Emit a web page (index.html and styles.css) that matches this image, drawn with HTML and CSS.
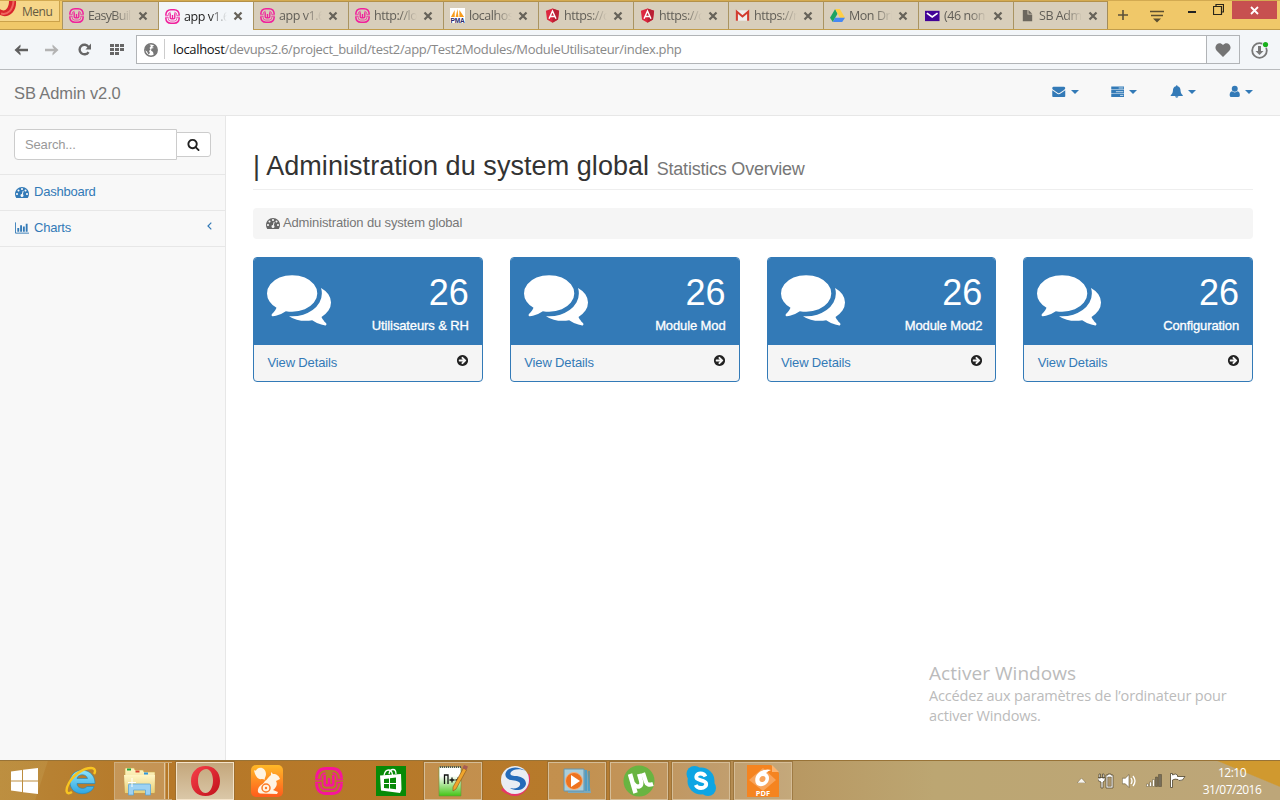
FILE: index.html
```html
<!DOCTYPE html>
<html lang="fr">
<head>
<meta charset="utf-8">
<title>app v1.6</title>
<link rel="stylesheet" href="styles.css">
</head>
<body>
<svg class="defs" width="0" height="0" aria-hidden="true">
  <defs>
    <linearGradient id="gold" x2="0" y2="1"><stop stop-color="#ffb928"/><stop offset="1" stop-color="#ff5c1c"/></linearGradient>
    <linearGradient id="lime" x2="0" y2="1"><stop offset=".3" stop-color="#fff"/><stop offset="1" stop-color="#43c414"/></linearGradient>
    <linearGradient id="folder" x2="0" y2="1"><stop stop-color="#fff6c5"/><stop offset="1" stop-color="#e8cf78"/></linearGradient>
    <linearGradient id="ieblue" x2="0" y2="1"><stop stop-color="#8ee4fb"/><stop offset="1" stop-color="#2fa6e2"/></linearGradient>
    <linearGradient id="opera" x2="1" y2="1"><stop stop-color="#f8404a"/><stop offset="1" stop-color="#c0101a"/></linearGradient>
    <symbol id="wamp" viewBox="0 0 28 28"><g fill="none" stroke="currentColor"><path d="M1.500 11.500Q2 1.500 11 1.500h6q9 0 9.500 10M1.500 16.500Q2 26.500 11 26.500h6q9 0 9.500-10" stroke-width="2.800"/><path d="M0 12.500h6V11q0-4.500 4.500-5M0 15.500h6V18q0 4.500 4.500 4.500h7q4.500 0 4.500-4.500v-2.500h6M28 12.500h-6V11q0-4.500-4.500-5" stroke-width="1.400"/><path d="M9.700 8v8.500q0 2 2.200 2 2.100 0 2.100-2V11v5.500q0 2 2.100 2 2.200 0 2.200-2V8" stroke-width="2.500"/></g></symbol>
    <symbol id="angular" viewBox="0 0 16 16"><path d="M8 .5l7 2.400-1.100 9.300L8 15.600l-5.900-3.400L1 2.900z" fill="#dd2740"/><path d="M8 .5l7 2.400-1.100 9.300L8 15.600z" fill="#b92034"/><path d="M4.300 11.400L8 3.200l3.700 8.200M5.600 9h4.800" fill="none" stroke="#fff" stroke-width="1.500"/></symbol>
    <symbol id="dash" viewBox="0 0 1792 1792"><path d="M384 1152q0-53-37.500-90.500t-90.500-37.500-90.500 37.500-37.500 90.500 37.500 90.500 90.500 37.500 90.500-37.500 37.500-90.500zm192-448q0-53-37.500-90.500t-90.500-37.500-90.500 37.500-37.500 90.500 37.500 90.500 90.500 37.500 90.500-37.500 37.500-90.500zm428 481l101-382q6-26-7.500-48.500t-38.500-29.500-48 6.500-30 39.500l-101 382q-60 5-107 43.500t-63 98.500q-20 77 20 146t117 89 146-20 89-117q16-60-6-117t-72-91zm660-33q0-53-37.500-90.500t-90.500-37.500-90.500 37.500-37.500 90.500 37.500 90.500 90.500 37.500 90.500-37.500 37.500-90.500zm-640-640q0-53-37.500-90.500t-90.500-37.500-90.500 37.500-37.500 90.500 37.500 90.500 90.500 37.500 90.500-37.500 37.500-90.500zm448 192q0-53-37.500-90.500t-90.500-37.500-90.500 37.500-37.500 90.500 37.500 90.500 90.500 37.500 90.500-37.500 37.500-90.500zm320 448q0 261-141 483-19 29-54 29h-1402q-35 0-54-29-141-221-141-483 0-182 71-348t191-286 286-191 348-71 348 71 286 191 191 286 71 348z"/></symbol>
    <symbol id="comments" viewBox="0 0 1792 1792"><path d="M1408 768q0 139-94 257t-256.500 186.500-353.500 68.500q-86 0-176-16-124 88-278 128-36 9-86 16h-3q-11 0-20.500-8t-11.500-21q-1-3-1-6.500t.5-6.500 2-6l2.500-5 3.500-5.500 4-5 4.500-5 4-4.500q5-6 23-25t26-29.500 22.500-29 25-38.500 20.500-44q-124-72-195-177t-71-224q0-139 94-257t256.500-186.500 353.500-68.500 353.500 68.500 256.500 186.500 94 257zm384 256q0 120-71 224.500t-195 176.500q10 24 20.500 44t25 38.500 22.500 29 26 29.500 23 25q1 1 4 4.500t4.500 5 4 5 3.500 5.500l2.500 5 2 6 .5 6.500-1 6.500q-3 14-13 22t-22 7q-50-7-86-16-154-40-278-128-90 16-176 16-271 0-472-132 58 4 88 4 161 0 309-45t264-129q125-92 192-212t67-254q0-77-23-152 129 71 204 178t75 230z"/></symbol>
    <symbol id="arrow" viewBox="0 0 1792 1792"><path d="M1413 896q0-27-18-45l-91-91-362-362q-18-18-45-18t-45 18l-91 91q-18 18-18 45t18 45l189 189h-502q-26 0-45 19t-19 45v128q0 26 19 45t45 19h502l-189 189q-19 19-19 45t19 45l91 91q18 18 45 18t45-18l362-362 91-91q18-18 18-45zm251 0q0 209-103 385.500t-279.500 279.500-385.500 103-385.500-103-279.500-279.500-103-385.500 103-385.500 279.500-279.500 385.500-103 385.500 103 279.500 279.500 103 385.500z"/></symbol>
    <symbol id="x" viewBox="0 0 10 10"><path d="M1.500 1.500l7 7M8.500 1.500l-7 7" stroke="#666259" stroke-width="2.200"/></symbol>
  </defs>
</svg>

<header class="tabbar">
  <div class="menu"><svg width="17" height="17" viewBox="0 0 17 17"><path d="M0 8C5 12 9 7 9 0h7c1 11-8 18-16 14z" fill="#d8262c"/><path d="M1 12.500c7 2 12-4 12.500-12.500" fill="none" stroke="#f0665f" stroke-width="2"/></svg><span>Menu</span></div>
  <nav class="tabs">
    <div class="tab first"><svg class="fav pink"><use href="#wamp"/></svg><span>EasyBuil</span><svg class="x"><use href="#x"/></svg></div>
    <div class="tab active"><svg class="fav pink"><use href="#wamp"/></svg><span>app v1.6</span><svg class="x"><use href="#x"/></svg></div>
    <div class="tab"><svg class="fav pink"><use href="#wamp"/></svg><span>app v1.6</span><svg class="x"><use href="#x"/></svg></div>
    <div class="tab"><svg class="fav pink"><use href="#wamp"/></svg><span>http://lo</span><svg class="x"><use href="#x"/></svg></div>
    <div class="tab"><svg class="fav" viewBox="0 0 16 16"><path d="M0 0h16v16H0z" fill="#fff"/><path d="M1 9.500L5 2v7.500zM6 9.500L8 1l1 8.500zM10 9.500V2l5 7.500z" fill="#f89c1c"/><text x="8" y="15.700" class="pma">PMA</text></svg><span>localhos</span><svg class="x"><use href="#x"/></svg></div>
    <div class="tab"><svg class="fav"><use href="#angular"/></svg><span>https://c</span><svg class="x"><use href="#x"/></svg></div>
    <div class="tab"><svg class="fav"><use href="#angular"/></svg><span>https://c</span><svg class="x"><use href="#x"/></svg></div>
    <div class="tab"><svg class="fav" viewBox="0 0 16 16"><path d="M1 2.500h14v11H1z" fill="#eee"/><path d="M2 13.500V4l6 5 6-5v9.500" fill="none" stroke="#d23c30" stroke-width="2.200"/></svg><span>https://r</span><svg class="x"><use href="#x"/></svg></div>
    <div class="tab"><svg class="fav" viewBox="0 0 16 16"><path d="M5.500 1L0 10.500 3 15 8 6z" fill="#1da362"/><path d="M5.500 1h5l5.500 9.500h-5.500z" fill="#ffcf45"/><path d="M5.500 10.500H16L13 15H3z" fill="#4688f4"/></svg><span>Mon Dri</span><svg class="x"><use href="#x"/></svg></div>
    <div class="tab"><svg class="fav" viewBox="0 0 16 16"><path d="M0 3h15.500v11H0z" fill="#420297"/><path d="M2 5.500l5.700 4 5.700-4" fill="none" stroke="#fff" stroke-width="1.800"/></svg><span>(46 non</span><svg class="x"><use href="#x"/></svg></div>
    <div class="tab"><svg class="fav" viewBox="0 0 16 16"><path d="M3 2h5v5h5v7H3z" fill="#6c675e"/><path d="M9 2l4 4H9z" fill="#6c675e"/></svg><span>SB Adm</span><svg class="x"><use href="#x"/></svg></div>
  </nav>
  <svg class="plus" width="10" height="10"><path d="M5 0v10M0 5h10" stroke="#5b503a" stroke-width="1.600"/></svg>
  <svg class="tabmenu" width="14" height="13"><path d="M0 1.500h14M1 5.500h12" stroke="#5b4e30" stroke-width="1.500"/><path d="M3 8.500h8L7 12.500z" fill="#5b4e30"/></svg>
  <svg class="min" width="8" height="3"><path d="M0 0h8v2H0z" fill="#222"/></svg>
  <svg class="max" width="11" height="11"><path d="M3 2.500V.5h7.500v7.500H8.500M.5 2.500h8v8h-8z" fill="none" stroke="#292519" stroke-width="1.200"/></svg>
  <div class="close"><svg width="9" height="9"><path d="M1 1l7 7M8 1l-7 7" stroke="#fff" stroke-width="1.800"/></svg></div>
</header>

<div class="toolbar">
  <svg class="back" width="14" height="12" viewBox="0 0 14 12"><path d="M6.500.5L.5 6l6 5.500V9L5 7.300h9V4.700H5L6.500 3z" fill="#5f5f5f"/></svg>
  <svg class="fwd" width="14" height="12" viewBox="0 0 14 12"><path d="M7.500.5l6 5.500-6 5.500V9L9 7.300H0V4.700h9L7.500 3z" fill="#b3b3b3"/></svg>
  <svg class="reload" width="13" height="13" viewBox="0 0 13 13"><path d="M10.500 9a4.800 4.800 0 1 1 0-5" fill="none" stroke="#666" stroke-width="2.400"/><path d="M13 .5v6H7.500z" fill="#666"/></svg>
  <svg class="apps" width="14" height="11"><path d="M0 1.500h14M0 5.500h14M0 9.500h9" stroke="#666" stroke-width="3" stroke-dasharray="4 1"/></svg>
  <div class="address">
    <svg width="14" height="14" viewBox="0 0 14 14"><circle cx="7" cy="7" r="6.200" fill="#fff" stroke="#777" stroke-width="1.500"/><path d="M1.500 4L5 1.500 7 3 5.500 5l1 1.500L5 8l1 2-1.500 1.500L3 8.500 1 7zM8 4l3-2 2 4v4l-3 3-1-4-2-1.500.5-2L10 5z" fill="#777"/></svg>
    <span class="url"><b>localhost</b>/devups2.6/project_build/test2/app/Test2Modules/ModuleUtilisateur/index.php</span>
    <div class="heart"><svg width="16" height="14" viewBox="0 0 16 14"><path d="M8 14L1.500 7.500C-2 3 4-2.500 8 2c4-4.500 10 1 6.500 5.500z" fill="#747474"/></svg></div>
  </div>
  <svg class="download" width="18" height="18" viewBox="0 0 18 18"><circle cx="8.500" cy="9.500" r="7.300" fill="none" stroke="#777" stroke-width="1.800"/><path d="M7 5h3v5h2.500l-4 4-4-4H7z" fill="#777"/><circle cx="14.500" cy="3.500" r="3.300" fill="#f3f6f9"/><circle cx="14.500" cy="3.500" r="2.600" fill="#19b01c"/></svg>
</div>

<div class="navbar">
  <a class="brand">SB Admin v2.0</a>
  <div class="toplinks">
    <a><svg class="ic" viewBox="0 0 1792 1792"><path d="M1792 710v794q0 66-47 113t-113 47h-1472q-66 0-113-47t-47-113v-794q44 49 101 87 362 246 497 345 57 42 92.500 65.500t94.500 48 110 24.500h2q51 0 110-24.500t94.500-48 92.500-65.500q170-123 498-345 57-39 100-87zm0-294q0 79-49 151t-122 123q-376 261-468 325-10 7-42.500 31t-54 38.500-52 32.500-57.500 27-50 9h-2q-23 0-50-9t-57.500-27-52-32.500-54-38.500-42.500-31q-91-64-262-182.500t-205-142.500q-62-42-117-115.500t-55-136.500q0-78 41.500-130t118.500-52h1472q65 0 112.500 47t47.500 113z"/></svg><i class="caret"></i></a>
    <a><svg class="ic" viewBox="0 0 14 14"><path d="M0 1.500h14v3.300H0zM0 5.500h14v3.300H0zM0 9.500h14v3.300H0z"/><path d="M8 3.200h5M5 7.200h8M9.500 11.200h3.500" stroke="#c9dff0"/></svg><i class="caret"></i></a>
    <a><svg class="ic" viewBox="0 0 14 14"><path d="M7 .3q.9 0 .9 1c2.300.5 3.100 2.200 3.200 4.700.1 2.400.9 4 2.400 5v.8H.5V11c1.500-1 2.300-2.600 2.400-5 .1-2.500.9-4.200 3.200-4.700q0-1 .9-1zM5.200 12.200h3.600q-.2 1.600-1.800 1.600t-1.800-1.600z"/></svg><i class="caret"></i></a>
    <a><svg class="ic person" viewBox="0 0 11 14"><circle cx="5.500" cy="4" r="3.200"/><path d="M2.500 6.800q3 2.500 6 0Q11 7.500 11 11q0 2-2 2H2q-2 0-2-2 0-3.500 2.500-4.200z"/></svg><i class="caret"></i></a>
  </div>
</div>

<div class="page">
  <aside class="sidebar">
    <div class="search"><div class="field">Search...</div><div class="go"><svg width="13" height="13" viewBox="0 0 1792 1792"><path d="M1216 832q0-185-131.500-316.500t-316.500-131.500-316.500 131.500-131.500 316.500 131.500 316.500 316.500 131.500 316.500-131.500 131.500-316.500zm512 832q0 52-38 90t-90 38q-54 0-90-38l-343-342q-179 124-399 124-143 0-273.500-55.500t-225-150-150-225-55.500-273.500 55.500-273.500 150-225 225-150 273.500-55.500 273.500 55.500 225 150 150 225 55.500 273.500q0 220-124 399l343 343q37 37 37 90z"/></svg></div></div>
    <a class="item"><svg width="14" height="14"><use href="#dash"/></svg><span>Dashboard</span></a>
    <a class="item"><svg width="14" height="14" viewBox="0 0 15 14"><path d="M.5 1v11.500H15" fill="none" stroke="#337ab7"/><path d="M2.500 7h2v4h-2zM5.500 4h2v7h-2zM8.500 5.500h2V11h-2zM11.500 2.500h2V11h-2z"/></svg><span>Charts</span><svg class="angle" width="5" height="8"><path d="M4.300.7L1 4l3.300 3.300" fill="none" stroke="#337ab7" stroke-width="1.200"/></svg></a>
  </aside>
  <main>
    <h1>| Administration du system global <small>Statistics Overview</small></h1>
    <div class="crumb"><svg width="14" height="14"><use href="#dash"/></svg><span>Administration du system global</span></div>
    <div class="cards">
      <section class="card"><div class="top"><svg class="bubble"><use href="#comments"/></svg><div class="num"><strong>26</strong><span class="lab">Utilisateurs &amp; RH</span></div></div><a class="foot">View Details<svg width="13" height="13"><use href="#arrow"/></svg></a></section>
      <section class="card"><div class="top"><svg class="bubble"><use href="#comments"/></svg><div class="num"><strong>26</strong><span class="lab">Module Mod</span></div></div><a class="foot">View Details<svg width="13" height="13"><use href="#arrow"/></svg></a></section>
      <section class="card"><div class="top"><svg class="bubble"><use href="#comments"/></svg><div class="num"><strong>26</strong><span class="lab">Module Mod2</span></div></div><a class="foot">View Details<svg width="13" height="13"><use href="#arrow"/></svg></a></section>
      <section class="card"><div class="top"><svg class="bubble"><use href="#comments"/></svg><div class="num"><strong>26</strong><span class="lab">Configuration</span></div></div><a class="foot">View Details<svg width="13" height="13"><use href="#arrow"/></svg></a></section>
    </div>
  </main>
</div>

<div class="watermark"><div class="wm-title">Activer Windows</div><div>Accédez aux paramètres de l’ordinateur pour</div><div>activer Windows.</div></div>

<footer class="taskbar">
  <div class="start"><svg width="27" height="26" viewBox="0 0 27 26"><path d="M0 3.500l11-1.500v10.500H0zM12 1.800L27 0v12.500H12zM0 13.500h11V24L0 22.500zM12 13.500h15V26l-15-1.800z" fill="#fff"/></svg></div>
  <div class="cell"><svg width="32" height="32" viewBox="0 0 32 32"><path fill-rule="evenodd" d="M30 18.500H12c0 5 7 6.500 10 3h7C26 31.500 5 32 5 17 5 1 30 1 30 18.500zM12 13.500h10.500c-1-5-9.500-5-10.500 0z" fill="url(#ieblue)" stroke="#2789bd" stroke-width=".7"/><path d="M7 27C1 31 0 25 4 18 9 9 19 3 26 3c4 0 5 3 3 6" fill="none" stroke="#f8c521" stroke-width="2.400"/></svg></div>
  <div class="cell explorer"><svg width="32" height="32" viewBox="0 0 32 32"><path d="M2 4q0-1 1-1h8l1 2h8l1 2h11v21H2z" fill="url(#folder)" stroke="#c9a846" stroke-width=".6"/><path d="M4 3.500h4v2H4z" fill="#20a53c"/><path d="M12.500 5.500h4v2h-4z" fill="#d7442f"/><path d="M21 7.500h4v2h-4z" fill="#2d98de"/><path d="M1 10h31l-1 18H2z" fill="url(#folder)"/><path d="M5.500 30V20q0-1 1-1h20q1 0 1 1v10h-5v-5h-12v5z" fill="#9dd2f3" stroke="#5ca6d8" stroke-width=".8"/><path d="M9 13v9M5 17.500h8" stroke="#fff"/></svg><i></i><i></i></div>
  <div class="cell open current"><svg width="31" height="32" viewBox="0 0 31 32"><path fill-rule="evenodd" d="M15.500 1C24 1 30 7 30 16s-6 15-14.500 15S1 25 1 16 7 1 15.500 1zm1 3C11 4 8 9 8 15.500S11 28 15.500 28 23 22 23 15.500 20 4 16.500 4z" fill="url(#opera)"/></svg></div>
  <div class="cell"><svg width="32" height="32" viewBox="0 0 32 32"><rect width="32" height="32" rx="5" fill="url(#gold)"/><path d="M9 28.500C6 28 6 23 10 20c5-3 5-6 1-6-4 1-7-3-8-9 1 1 2 1 3-1 4-3 9 0 9 5 0 3-2 4-1 7 2-1 3-4 6-6V7l2 2c4 0 6 2 7 5l-4 2c2 3 0 7-3 9l5 2-1 2z" fill="#fff4e3"/><circle cx="15" cy="23" r="4" fill="#fff4e3" stroke="#ff7b24" stroke-width="1.500"/><circle cx="15" cy="23" r="1.200" fill="#ff7b24"/></svg></div>
  <div class="cell"><svg class="wampbig" width="28" height="28"><use href="#wamp"/></svg></div>
  <div class="cell"><svg width="30" height="30" viewBox="0 0 30 30"><path d="M0 0h30v30H0z" fill="#078a07"/><path d="M4 9.500L25 8l.5 15.500L24 27 5 24.500z" fill="#fff"/><path d="M8 9.500Q9 4 12.500 4t4 5M13 8q1-4.500 4-4.500T20 8" fill="none" stroke="#fff" stroke-width="1.300"/><path d="M8 13l5-.6V17H8zM14 12.300l6-.7V17h-6zM8 18h5v4.500L8 22zM14 18h6v5.300l-6-.7z" fill="#078a07"/></svg></div>
  <div class="cell open"><svg width="32" height="32" viewBox="0 0 32 32"><path d="M2 2h22v29H2z" fill="url(#lime)" stroke="#66933d" stroke-width=".6"/><path d="M3 2h21" stroke="#555" stroke-width="2" stroke-dasharray="1 1"/><path d="M7.500 19v-9h3.500v9M12.500 15h5M15 12.500v5M18.500 15h5M21 12.500v5" fill="none" stroke="#111" stroke-width="1.300"/><path d="M26.500 3l3 2-10.500 19-3 2v-4z" fill="#f0a52c" stroke="#865317" stroke-width=".6"/><path d="M27 0l4 1.500-1.500 3.500-4-2z" fill="#a65b54"/></svg></div>
  <div class="cell"><svg width="32" height="32" viewBox="0 0 32 32"><path d="M3 24q14 11 23 0 5-7 3-15" fill="none" stroke="#e83667" stroke-width="3"/><circle cx="16" cy="15" r="14" fill="#e9edf3"/><path d="M27 6Q17 0 10 4C4 8 6 14 12 15c5 1 10 1 9 5-1 3-5 4-10 3 6 4 15 2 16-4 0-5-4-7-9-8-5 0-8-1-6-4s9-4 15-1z" fill="#246bb9"/></svg></div>
  <div class="cell open"><svg width="32" height="28" viewBox="0 0 32 28"><path d="M5 3h21l4 23H7z" fill="#7ba9bd"/><path d="M3 2h20v22H3z" fill="#a9cedb" stroke="#6795ad"/><path d="M25 3v21M28 4v20" stroke="#2792cc"/><circle cx="13" cy="14" r="8.500" fill="#ee731e" stroke="#f7b27d"/><path d="M10 8l9 6-9 6z" fill="#fff"/></svg></div>
  <div class="cell open"><svg width="32" height="32" viewBox="0 0 32 32"><circle cx="16" cy="16" r="15.500" fill="#69b441"/><path d="M7 9l5.500 19" fill="none" stroke="#fff" stroke-width="4.500"/><path d="M10 18q3 5 7 3 2-1 1-5l-2-7M20 8l3 9q1 4 7 2" fill="none" stroke="#fff" stroke-width="4.200"/></svg></div>
  <div class="cell open"><svg width="32" height="32" viewBox="0 0 32 32"><g fill="#0ea5e3"><circle cx="16" cy="16" r="13.500"/><circle cx="9.500" cy="9" r="8"/><circle cx="23" cy="23" r="8"/></g><path d="M20.500 11.500q-1.500-3-5-3C11.500 8.500 10.500 12 12 13.700c2 1.800 8 1.800 9 4.300 1 3-2 5-5 5q-4 0-5.300-3" fill="none" stroke="#fff" stroke-width="3.800"/></svg></div>
  <div class="cell open"><svg width="32" height="32" viewBox="0 0 32 32"><path d="M0 0h24l8 8v24H0z" fill="#f58420"/><path d="M25 0v7h7z" fill="#fbb36f"/><path d="M16 3l13 12-13 11L2 15z" fill="#f8a45b"/><path fill-rule="evenodd" d="M24 5q-3-1-7 0C9 7 6 15 10 20c4 3 12 0 12-7 0-2-1-4-3-5q2-2 5-3zm-8 6c4 0 3 6-1 6s-3-6 1-6z" fill="#fff"/><text x="16" y="30.500" class="pdf">PDF</text></svg></div>
  <div class="tray">
    <svg width="9" height="5"><path d="M0 5l4.500-5L9 5z" fill="#f7f5ef" stroke="#756746" stroke-width=".5"/></svg>
    <svg class="power" width="16" height="16" viewBox="0 0 16 16"><path d="M0 4.500h7v3L5 9v6H3V9L0 7.500zM1 1h1.500v4H1zM4.500 1H6v4H4.500zM8 2h2V1h3v1h2v13H8z" fill="#fff" stroke="#574c36" stroke-width=".8"/><path d="M9.700 4h3.600v9.300H9.700z" fill="#ad966c" stroke="#574c36" stroke-width=".5"/></svg>
    <svg width="15" height="14" viewBox="0 0 15 14"><path d="M.3 4.200h3L7 .5v13L3.300 9.800h-3z" fill="#fff" stroke="#625435" stroke-width=".6"/><path d="M9 4q2 3 0 6M11 2q4 5 0 10" fill="none" stroke="#fff" stroke-width="1.300"/></svg>
    <svg width="16" height="13" viewBox="0 0 16 13"><path d="M.5 10h2v2.500h-2zM3.500 8h2v4.500h-2zM6.500 5.500h2v7h-2z" fill="#fff" stroke="#625435" stroke-width=".5"/><path d="M9.500 3h2v9.500h-2zM12.500.5h3v12h-3z" fill="#776e5b" stroke="#524832" stroke-width=".5"/></svg>
    <svg width="16" height="15" viewBox="0 0 16 15"><path d="M.5.500h2V2q3-2 5 0v1.500h7.500q-2 5-6 4l-1-1q-3-1-5.500.5v7.500h-2z" fill="#fff" stroke="#4f452f" stroke-width=".8"/></svg>
  </div>
  <div class="clock"><span>12:10</span><span>31/07/2016</span></div>
</footer>
</body>
</html>
```
FILE: styles.css
```css
* { box-sizing: border-box; }
body { margin: 0; width: 1280px; height: 800px; overflow: hidden; display: flex; flex-direction: column; font: 13px/18px "Liberation Sans", Arial, sans-serif; letter-spacing: -.14px; color: #333; background: #fff; }
svg { display: block; flex: none; }
.defs { position: absolute; }

.tabbar { height: 30px; flex: none; display: flex; align-items: flex-start; background: #f0c869; border-bottom: 1px solid #c19c4b; border-top: 1px solid #d3aa51; font: 12.5px/16px "Open Sans", "Noto Sans", sans-serif; }
.menu { width: 60px; height: 21px; margin-right: 2px; display: flex; background: #f6d689; border: solid #cba24a; border-width: 0 1px 1px 0; color: #655a42; font-size: 12px; }
.menu span { margin: 3px 0 0 5px; letter-spacing: -.5px; }
.tabs { display: flex; }
.tab { width: 95px; height: 28px; display: flex; align-items: center; padding-left: 6px; background: #d8cebb; border-left: 1px solid #a99462; border-top: 1px solid #b49149; color: #615e57; }
.tab.first { width: 96px; }
.tab:last-child { border-right: 1px solid #a38c59; }
.tab.active { height: 29px; background: #f3f6f9; color: #222; }
.tab span { width: 43px; margin: 1px 6px 0 4px; white-space: nowrap; letter-spacing: -.45px; -webkit-mask-image: linear-gradient(90deg, #000 60%, transparent); mask-image: linear-gradient(90deg, #000 60%, transparent); }
.tab.first span { width: 44px; letter-spacing: -.7px; }
.fav { width: 15px; height: 15px; }
.pink { color: #f0209c; }
.wampbig { color: #f7159a; }
.x { width: 10px; height: 10px; }
.pma { font: bold 7px "Liberation Sans", sans-serif; text-anchor: middle; fill: #29286b; }
.pdf { font: bold 7.5px "Open Sans", sans-serif; text-anchor: middle; fill: #fff; letter-spacing: 0; }
.plus { margin: 9px 0 0 10px; }
.tabmenu { margin: 9px 0 0 22px; }
.min { margin: 10px 0 0 24px; }
.max { margin: 3px 0 0 17px; }
.close { width: 45px; height: 18px; margin-left: 8px; background: #c75050; display: grid; place-items: center; }

.toolbar { height: 40px; flex: none; display: flex; align-items: center; padding-left: 14px; background: #f3f6f9; border-bottom: 1px solid #b8bbbe; }
.fwd { margin-left: 17px; }
.reload { margin-left: 19px; }
.apps { margin-left: 19px; }
.address { width: 1104px; height: 29px; margin-left: 12px; display: flex; align-items: center; padding-left: 7px; background: #fff; border: 1px solid #b1b4b7; }
.url { flex: 1; margin: -2px 0 0 6px; padding-left: 8px; border-left: 1px solid #ccc; color: #888; font: 13px/20px "Open Sans", "Noto Sans", sans-serif; letter-spacing: -.33px; white-space: nowrap; }
.url b { font-weight: 400; color: #111; }
.heart { width: 33px; height: 27px; display: grid; place-items: center; background: #f3f6f9; border-left: 1px solid #b1b4b7; }
.download { margin-left: 11px; }

.navbar { height: 46px; flex: none; display: flex; justify-content: space-between; padding: 0 27px 0 14px; background: #f8f8f8; border-bottom: 1px solid #e7e7e7; }
.brand { font-size: 16.5px; line-height: 46px; color: #777; letter-spacing: -.12px; }
.toplinks { display: flex; gap: 32.3px; padding-top: 14px; }
.toplinks a { display: flex; align-items: center; gap: 5px; height: 15px; fill: #337ab7; }
.ic { width: 13.5px; height: 13px; }
.person { width: 11.5px; }
.caret { border: 4px solid transparent; border-top-color: #337ab7; border-bottom: 0; }

.page { flex: 1; min-height: 0; display: flex; }
.sidebar { width: 226px; background: #f8f8f8; border-right: 1px solid #e7e7e7; color: #337ab7; fill: #337ab7; }
.search { height: 59px; display: flex; padding: 13px 14px; border-bottom: 1px solid #e7e7e7; }
.field { width: 163px; height: 31px; padding: 6px 10px; background: #fff; border: 1px solid #ccc; border-radius: 4px 0 0 4px; color: #999; }
.go { width: 35px; height: 25px; margin: 3px 0 0 -1px; display: grid; place-items: center; background: #fff; border: 1px solid #ccc; border-radius: 0 3px 3px 0; fill: #222; }
.item { height: 36px; display: flex; align-items: center; padding: 0 13px 2px 15px; border-bottom: 1px solid #e7e7e7; letter-spacing: -.22px; }
.item span { margin-left: 5px; }
.item .angle { margin: 0 0 3px auto; }

main { flex: 1; padding: 0 27px; }
h1 { height: 74px; margin: 0 0 18px; padding-top: 34px; border-bottom: 1px solid #eee; font-size: 27px; line-height: 33px; font-weight: 400; white-space: nowrap; letter-spacing: .06px; }
h1 small { font-size: 18px; color: #777; letter-spacing: -.22px; }
.crumb { height: 31px; display: flex; align-items: center; padding: 0 13px 1px; background: #f5f5f5; border-radius: 4px; color: #777; fill: #666; }
.crumb span { margin-left: 3px; }
.cards { display: grid; grid-template-columns: repeat(4, 1fr); gap: 27px; margin-top: 18px; }
.card { height: 125px; border: 1px solid #337ab7; border-radius: 4px; overflow: hidden; background: #f5f5f5; }
.top { height: 87px; display: flex; justify-content: space-between; padding: 8px 13px 0 13px; background: #337ab7; color: #fff; }
.bubble { width: 64px; height: 64px; fill: #fff; }
.num { text-align: right; }
.num strong { display: block; margin-top: 8px; font-size: 36px; line-height: 38px; font-weight: 400; letter-spacing: 0; }
.lab { display: block; margin-top: 5px; font-size: 13px; letter-spacing: -.12px; -webkit-text-stroke: .3px #fff; }
.foot { display: flex; justify-content: space-between; padding: 9px 12.5px 0 13.5px; color: #337ab7; fill: #222; letter-spacing: -.14px; }

.watermark { position: absolute; left: 929px; top: 660px; color: #bbb; font: 14.5px/20px "Open Sans", "Noto Sans", sans-serif; letter-spacing: -.17px; white-space: nowrap; }
.wm-title { font-size: 19px; line-height: 26px; letter-spacing: .05px; }

.taskbar { height: 40px; flex: none; display: flex; align-items: center; gap: 4px; border-top: 1px solid #987337; background: linear-gradient(22.5deg, transparent 61%, #d0992f 63%) right / 70px 100% no-repeat, linear-gradient(108deg, #c39b4e66 0 45px, transparent 46px) no-repeat, linear-gradient(90deg, #b98737 0, #b78132 4%, #b67828 12%, #b77a2b 45%, #b4874b 55%, #b89862 62%, #bca672 73%, #bda679 100%); }
.start { width: 48px; padding-left: 11px; }
.cell { width: 58px; height: 38px; display: flex; align-items: center; justify-content: center; }
.open { border: 1px solid #d5bd97; background: #ffffff2b; box-shadow: 0 0 0 1px #8e683199; }
.current { background: linear-gradient(#c4a77c, #dac7a7); border-color: #f4e3c8; }
.explorer { justify-content: flex-start; padding-left: 8px; border: solid #ceae7e; border-width: 1px 0 1px 1px; background: linear-gradient(90deg, #ffffff35 51px, transparent 51px); }
.explorer i { width: 4px; height: 100%; border-left: 1px solid #e0c69c; }
.explorer svg { margin-right: 9px; }
.tray { display: flex; align-items: center; gap: 8.5px; margin: 0 0 0 auto; }
.power { margin-left: 3px; }
.clock { width: 90px; display: flex; flex-direction: column; align-items: center; padding-right: 6px; color: #fff; font: 12px/17px "Open Sans", "Noto Sans", sans-serif; letter-spacing: -.5px; }
```
